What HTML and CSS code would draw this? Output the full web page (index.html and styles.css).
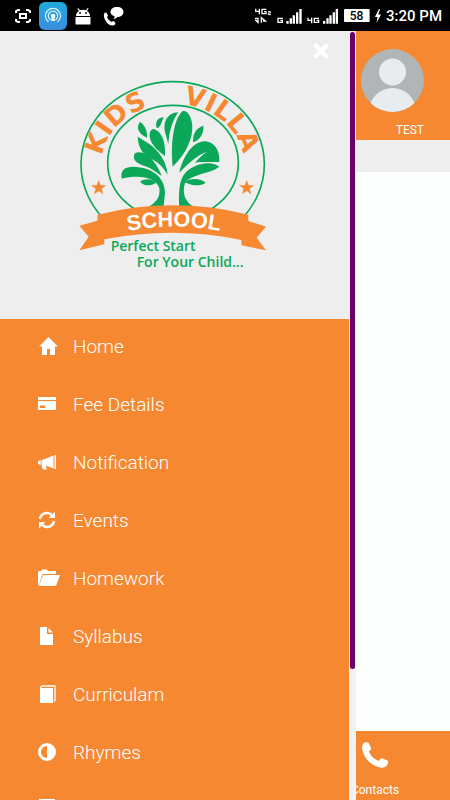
FILE: index.html
```html
<!DOCTYPE html>
<html lang="en">
<head>
    <meta charset="UTF-8">
    <meta name="viewport" content="width=device-width, initial-scale=1">
    <title>Kids Villa School</title>
    <link rel="stylesheet" href="styles.css">
</head>
<body>
    <div class="status-bar">
        <div class="status-left">
            <svg width="16" height="14" viewBox="0 0 16 14" fill="none" stroke="#fff" stroke-width="2">
                <path d="M1 4V2l2-1h2M11 1h2l2 1v2M15 10v2l-2 1h-2M5 13H3l-2-1v-2"/>
                <rect x="5" y="5" width="6" height="4"/>
            </svg>
            <svg width="28" height="28" viewBox="0 0 28 28">
                <defs>
                    <linearGradient id="castFill" x1="0" y1="0" x2="0" y2="1">
                        <stop offset="0" stop-color="#20a8dc"/>
                        <stop offset="1" stop-color="#3a8ee0"/>
                    </linearGradient>
                </defs>
                <rect width="28" height="28" rx="6" fill="url(#castFill)"/>
                <g fill="none" stroke="#d8f0fc" stroke-width="1.3" stroke-linecap="round">
                    <path d="M9 19.500a7.500 7.500 0 1 1 10 0"/>
                    <path d="M11 17.500a4.700 4.700 0 1 1 6 0"/>
                </g>
                <circle cx="14" cy="14" r="2.300" fill="#fff"/>
                <path d="M12.500 16h3l.5 3h-4z" fill="#fff"/>
            </svg>
            <svg width="16" height="18" viewBox="0 0 16 18" fill="#fff">
                <path d="M1 9a7 6 0 0 1 3-5L2.500 1.500l.8-.6L5 3.300a8 8 0 0 1 6 0L12.700.9l.8.6L12 4a7 6 0 0 1 3 5z"/>
                <path d="M.5 10h15v7.500H.5z"/>
                <circle cx="5" cy="6" r=".9" fill="#000"/>
                <circle cx="11" cy="6" r=".9" fill="#000"/>
            </svg>
            <svg class="call" width="21" height="20" viewBox="0 0 21 20" fill="#fff">
                <path d="M14 1c4 0 6.500 2 6.500 5s-3 5-6 5c-1 1.200-2.500 2-4 2 .8-.8 1.100-1.800 1-2.700C9 9.400 7.500 8 7.500 6c0-3 2.500-5 6.500-5z"/>
                <path d="M1 8q1-2 2.500-1.200L5 9.500 4 11.500q1.500 3 4.500 4.500l2-1 2 2q0 2-2.500 2.500C5 20 0 13 1 8z"/>
            </svg>
        </div>
        <div class="status-right">
            <svg width="85" height="18" viewBox="87 20 255 54" fill="none" stroke="#fff" stroke-width="4">
                <path d="M92 25v8h13M103 25v17M124 27h-13v13h12v-6h-6"/>
                <path stroke-width="3" d="M129 34h7v4h-6v5h8"/>
                <path d="M90 54h9v12l-8-8M109 67V52l12 10h-7"/>
                <path d="M174 54h-15v12h13v-6h-6M249 52v8h13M260 52v17M282 54h-14v12h13v-6h-6"/>
                <path fill="#fff" stroke="none" d="M184 62h7v8h-7zM194 54h7v16h-7zM203 45h7v25h-7zM213 36h7v34h-7zM223 26h7v44h-7zM294 62h7v8h-7zM304 54h7v16h-7zM313 45h7v25h-7zM323 36h7v34h-7zM332 26h7v44h-7z"/>
            </svg>
            <span class="battery">58</span>
            <svg width="6" height="14" viewBox="0 0 6 14" fill="#fff">
                <path d="M4 0L0 8h2.500L1.500 14 6 5.500H3.300L5 0z"/>
            </svg>
            <span class="clock">3:20 PM</span>
        </div>
    </div>

    <div class="app">
        <header class="page-header">
            <svg class="avatar" width="63" height="63" viewBox="0 0 63 63">
                <clipPath id="avatarClip"><circle cx="31.500" cy="31.500" r="31.500"/></clipPath>
                <g clip-path="url(#avatarClip)">
                    <rect width="63" height="63" fill="#b0b5b6"/>
                    <circle cx="31.500" cy="23" r="13.500" fill="#e8ecee"/>
                    <ellipse cx="31.500" cy="61" rx="23" ry="22" fill="#e8ecee"/>
                </g>
            </svg>
            <span class="user-name">TEST</span>
        </header>
        <div class="page-strip"></div>
        <main class="page-body"></main>
        <nav class="bottom-nav">
            <a href="#contacts">
                <svg width="26" height="26" viewBox="0 0 24 24" fill="#fff">
                    <path d="M1.500 1.200Q3 0 4.800.2L6 .8l2.300 4.500q.5 1.300-.6 2.200L6.300 8.700q2.500 6 9 8.800l1.500-1.700q.8-1 2-.6l4.400 1.700q1.200 1 .6 3.100-1.500 4-5.800 3.800C8 22.500 1 14 0 5q0-2.500 1.500-3.800z"/>
                </svg>
                <span>Contacts</span>
            </a>
        </nav>

        <!-- side menu, open over the page -->
        <aside class="drawer">
            <div class="drawer-content">
                <div class="drawer-head">
                    <button class="close" aria-label="Close menu">
                        <svg width="16" height="16" viewBox="0 0 16 16" stroke="#fff" stroke-width="4">
                            <path d="M1.500 1.500l13 13M14.500 1.500l-13 13"/>
                        </svg>
                    </button>
                    <svg class="logo" width="206" height="206" viewBox="0 0 618 618">
                        <defs>
                            <path id="nameArc" d="M94 284A214 184 0 0 1 522 284"/>
                            <path id="schoolArc" d="M152 488Q310 451 472 488"/>
                            <clipPath id="ringClip"><rect width="618" height="440"/></clipPath>
                        </defs>
                        <g fill="none" stroke="#0aa858" stroke-width="5" clip-path="url(#ringClip)">
                            <ellipse cx="308" cy="283" rx="275" ry="248"/>
                            <ellipse cx="309" cy="278" rx="196" ry="172"/>
                        </g>
                        <!-- tree -->
                        <g fill="#0aa858">
                            <path d="M340 122C312 140 300 220 308 290C345 255 372 205 366 160C362 135 352 124 340 122z"/>
                            <path d="M325 127C290 128 278 160 286 190L295 222C297 190 305 155 325 127z"/>
                            <path d="M281 142C262 142 255 158 260 174C272 175 274 155 281 142z"/>
                            <path d="M210 155C198 172 203 190 231 203C233 185 225 165 210 155z"/>
                            <path d="M250 177C236 180 236 200 246 220C258 240 275 250 285 258C287 225 280 185 250 177z"/>
                            <path d="M203 200C205 240 225 258 250 270C270 280 285 300 293 315C290 275 265 240 235 220z"/>
                            <path d="M195 250C188 262 190 275 215 285C240 292 258 305 275 318C262 280 225 235 195 250z"/>
                            <path d="M155 326C150 300 165 290 190 290C245 292 285 320 285 370L280 415H229C255 400 272 385 268 355C260 325 215 312 155 326z"/>
                            <path d="M210 335C225 325 245 325 258 338C240 350 222 348 210 335z"/>
                            <path d="M400 167C375 175 368 195 369 217C390 210 402 190 400 167z"/>
                            <path d="M328 308C335 275 360 215 405 214C440 217 450 250 448 276C425 277 395 275 375 278C390 262 400 252 410 246C385 252 350 285 328 308z"/>
                            <path d="M448 290C430 275 390 275 355 300C330 320 325 350 328 415H380C345 400 335 370 345 340C360 312 420 312 448 290z"/>
                            <path d="M345 336C360 322 395 325 407 338C390 350 365 348 345 336z"/>
                        </g>
                        <g fill="#f68832">
                            <path d="M86 330l6 16h17l-14 10 5 17-14-10-14 10 5-17-14-10h17z"/>
                            <path d="M530 330l6 16h17l-14 10 5 17-14-10-14 10 5-17-14-10h17z"/>
                            <path d="M83 434Q310 378 535 434V453L588 470L560 503L588 541L514 526V510Q310 468 103 508V523L28 541L56 500L28 467L82 452z"/>
                            <text class="logo-name"><textPath href="#nameArc" startOffset="21%">KIDS</textPath></text>
                            <text class="logo-name"><textPath href="#nameArc" startOffset="75%">VILLA</textPath></text>
                        </g>
                        <text class="logo-school"><textPath href="#schoolArc" startOffset="50%">SCHOOL</textPath></text>
                        <text class="logo-tagline" x="122" y="543">Perfect Start</text>
                        <text class="logo-tagline" x="200" y="592">For Your Child...</text>
                    </svg>
                </div>
                <nav class="menu">
                    <a href="#home">
                        <svg width="22" height="22" viewBox="0 0 22 22">
                            <path d="M10.500 2L20 11.500h-3V20h-5v-6H9v6H4v-8.500H1z"/>
                        </svg>
                        Home
                    </a>
                    <a href="#fee-details">
                        <svg width="22" height="22" viewBox="0 0 22 22">
                            <path d="M0 4h18v3H0zM0 8h18v9H0zM2 12.500v2.500h5v-2.500z" fill-rule="evenodd"/>
                        </svg>
                        Fee Details
                    </a>
                    <a href="#notification">
                        <svg width="22" height="22" viewBox="0 0 22 22">
                            <path d="M16.500 4H18v14h-1.500zM15.500 4.500v13L8 14.500l.8 4H5l-1.500-4V9.200zM0 10h1.300v-.7h1.400v4.500H1.300V13H0z"/>
                        </svg>
                        Notification
                    </a>
                    <a href="#events">
                        <svg width="22" height="22" viewBox="0 0 22 22">
                            <path d="M2 10A7 7 0 0 1 13.500 5.700M16 12A7 7 0 0 1 4.500 16.300" fill="none" stroke="#fff" stroke-width="2.500"/>
                            <path d="M17 2.500V9h-6.500zM1 19.500V13h6.500z"/>
                        </svg>
                        Events
                    </a>
                    <a href="#homework">
                        <svg width="22" height="22" viewBox="0 0 22 22">
                            <path d="M0 18V5l1-1h2l1-1.500h5L10 4h8v3H4.500L1 18z"/>
                            <path d="M5 8h17l-4 11H1z"/>
                        </svg>
                        Homework
                    </a>
                    <a href="#syllabus">
                        <svg width="22" height="22" viewBox="0 0 22 22">
                            <path d="M2 2h7v7h6v11H2zM10.500 3l4.500 4.500h-4.500z"/>
                        </svg>
                        Syllabus
                    </a>
                    <a href="#curriculam">
                        <svg width="22" height="22" viewBox="0 0 22 22">
                            <path d="M2 5h13v15H2z"/>
                            <path d="M2 5l2-2h13v14.500l-1 1" fill="none" stroke="#fff" stroke-width="1.300"/>
                        </svg>
                        Curriculam
                    </a>
                    <a href="#rhymes">
                        <svg width="22" height="22" viewBox="0 0 22 22">
                            <path d="M9 2a9 9 0 1 0 0 18 9 9 0 0 0 0-18zM9 5v12a6 6 0 0 1 0-12z" fill-rule="evenodd"/>
                        </svg>
                        Rhymes
                    </a>
                    <a href="#more" aria-label="More">
                        <svg width="22" height="22" viewBox="0 0 22 22">
                            <path d="M1 0h16v22H1z"/>
                        </svg>
                    </a>
                </nav>
            </div>
            <div class="scroll-track"><div class="scroll-thumb"></div></div>
        </aside>
    </div>
</body>
</html>
```
FILE: styles.css
```css
* {
    box-sizing: border-box;
}
body {
    margin: 0;
    height: 100vh;
    display: flex;
    flex-direction: column;
    overflow: hidden;
    font-family: Roboto, sans-serif;
    color: #fff;
    background-color: #fff;
}
a {
    color: #fff;
    text-decoration: none;
}
svg {
    flex-shrink: 0;
}

/* status bar */
.status-bar {
    display: flex;
    justify-content: space-between;
    align-items: center;
    height: 31px;
    padding: 0 8px 0 15px;
    background-color: #000;
}
.status-left, .status-right {
    display: flex;
    align-items: center;
    gap: 8px;
}
.status-right {
    gap: 5px;
}
.call {
    margin-left: 4px;
}
.battery {
    width: 26px;
    height: 13px;
    border-radius: 1px;
    border-right: 1px solid #999;
    background-color: #fff;
    color: #000;
    font-size: 12px;
    font-weight: 500;
    line-height: 14px;
    text-align: center;
}
.clock {
    font-size: 15px;
    font-weight: 500;
}

/* page under the menu */
.app {
    position: relative;
    flex: 1;
    display: flex;
    flex-direction: column;
    overflow: hidden;
}
.page-header {
    display: flex;
    flex-direction: column;
    align-items: flex-end;
    gap: 10px;
    padding: 18px 26px 2px;
    background-color: #f68832;
}
.user-name {
    font-size: 12px;
    line-height: 16px;
}
.page-strip {
    height: 32px;
    background-color: #eee;
}
.page-body {
    flex: 1;
    background-color: #fdfefe;
}
.bottom-nav {
    display: flex;
    justify-content: flex-end;
    background-color: #f68832;
}
.bottom-nav a {
    display: flex;
    flex-direction: column;
    align-items: center;
    gap: 14px;
    width: 33.33%;
    padding: 11px 0 2px;
    font-size: 12px;
    line-height: 16px;
}

/* side menu */
.drawer {
    position: absolute;
    top: 0;
    bottom: 0;
    left: 0;
    width: 79%;
    display: flex;
    overflow: hidden;
}
.drawer-content {
    flex: 1;
    background-color: #f68832;
}
.drawer-head {
    display: flex;
    flex-direction: column;
    align-items: center;
    height: 288px;
    padding-top: 12px;
    background-color: #eee;
}
.close {
    align-self: flex-end;
    margin-right: 20px;
    padding: 0;
    border: none;
    background: none;
    line-height: 0;
    cursor: pointer;
}
.logo {
    margin: 11px 3px 0 0;
}
.logo-name {
    font-family: "DejaVu Sans", sans-serif;
    font-size: 78px;
    font-weight: bold;
    text-anchor: middle;
}
.logo-school {
    font-family: "Liberation Sans", Arial, sans-serif;
    font-size: 65px;
    font-weight: bold;
    text-anchor: middle;
    fill: #fff;
}
.logo-tagline {
    font-family: "Comic Sans MS", "Open Sans", sans-serif;
    font-size: 42px;
    font-weight: 600;
    fill: #0aa858;
}
.menu a {
    display: flex;
    align-items: center;
    gap: 13px;
    height: 58px;
    padding: 0 0 4px 38px;
    font-size: 19px;
    font-weight: 300;
}
.menu svg {
    width: 22px;
    fill: #fff;
}
.scroll-track {
    width: 7px;
    padding: 1px 1px 0;
    background-color: #f3f3f3;
}
.scroll-thumb {
    height: 83%;
    border-radius: 3px;
    background-color: #6a006a;
}
```
